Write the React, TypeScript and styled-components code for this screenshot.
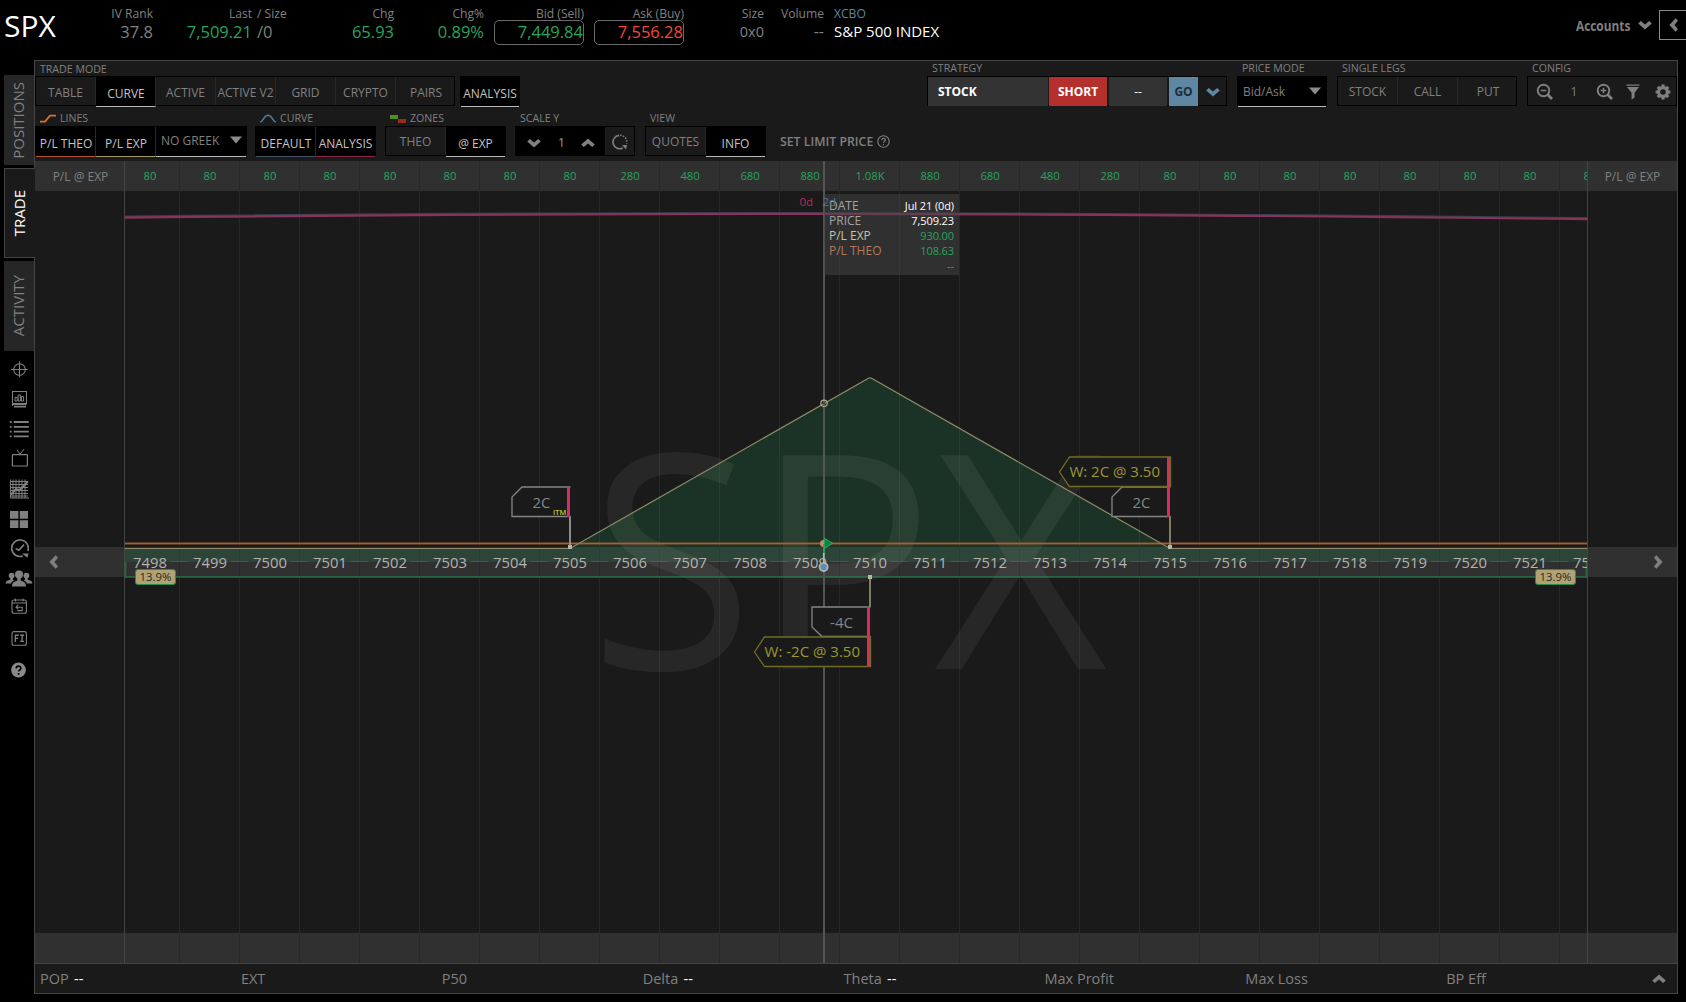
import React from "react";
import styled, { createGlobalStyle, css } from "styled-components";

const colors = {
  panel: "#1a1a1a",
  strip: "#303030",
  line: "#444444",
  text: "#808080",
  bright: "#c4c4c4",
  green: "#27a45d",
  red: "#f0473f",
  blue: "#5d87a3",
  pink: "#d62c62",
  tan: "#8d8b6b",
  olive: "#6f6d22",
};

const GlobalStyle = createGlobalStyle`
  *, *::before, *::after { box-sizing: border-box; }
  body {
    margin: 0;
    background: #000;
    overflow: hidden;
    color: ${colors.text};
    font-family: "Open Sans", "Noto Sans", sans-serif;
    font-size: 12px;
  }
  svg { display: block; flex: none; }
`;

const Page = styled.div`
  width: 1686px;
  height: 1002px;
  background: #000;
`;

/* ---------- quote header ---------- */

const Header = styled.header`
  display: flex;
  height: 60px;
  white-space: nowrap;
`;

const Ticker = styled.div`
  width: 93px;
  padding: 5px 0 0 4px;
  font-size: 30px;
  line-height: 42px;
  color: #fff;
`;

const Quote = styled.div<{ $width: number; $left?: boolean; $gap?: number }>`
  width: ${(p) => p.$width}px;
  margin-left: ${(p) => p.$gap || 0}px;
  padding-top: 5px;
  text-align: ${(p) => (p.$left ? "left" : "right")};
`;

const QuoteLabel = styled.div<{ $color?: string }>`
  font-size: 12.1px;
  line-height: 18px;
  height: 15px;
  color: ${(p) => p.$color || colors.text};
`;

const QuoteValue = styled.div<{ $color?: string; $boxed?: boolean; $size?: number; $line?: number }>`
  height: 25px;
  line-height: ${(p) => p.$line || 21}px;
  font-size: ${(p) => p.$size || 16.5}px;
  color: ${(p) => p.$color || colors.text};
  border: 1px solid ${(p) => (p.$boxed ? "#6a6a6a" : "transparent")};
  border-radius: 5px;
  padding-right: ${(p) => (p.$boxed ? 0 : 1)}px;
  margin-right: ${(p) => (p.$boxed ? 0 : -2)}px;
  margin-left: ${(p) => (p.$boxed ? 0 : -1)}px;
`;

const Accounts = styled.div`
  display: flex;
  align-items: center;
  height: 30px;
  width: 83px;
  margin: 10px 0 0 auto;
  font-size: 15px;
  font-weight: 700;

  span {
    width: 62px;
    transform: scaleX(0.79);
    transform-origin: 0 50%;
  }
`;

const CollapseButton = styled.div`
  display: flex;
  align-items: center;
  width: 27px;
  height: 30px;
  margin-top: 10px;
  padding-left: 7px;
  border: 1px solid #8a8a8a;
  border-right: 0;
`;

/* ---------- sidebar ---------- */

const Body = styled.div`
  display: flex;
  height: 934px;
`;

const Sidebar = styled.nav`
  display: flex;
  flex-direction: column;
  width: 34px;
  padding: 15px 0 0 4px;
`;

const SideTab = styled.div<{ $active?: boolean }>`
  display: flex;
  align-items: center;
  justify-content: center;
  height: 90px;
  margin-bottom: 3px;
  padding-right: 2px;
  background: #262626;
  font-size: 15px;
  z-index: 1;

  span {
    writing-mode: vertical-rl;
    transform: rotate(180deg);
    line-height: 20px;
  }

  ${(p) =>
    p.$active &&
    css`
      margin-right: -1px;
      background: ${colors.panel};
      color: #fff;
      border: 1px solid ${colors.line};
      border-right: 0;
    `}
`;

const SideIcons = styled.div`
  display: flex;
  flex-direction: column;
  align-items: center;
`;

const SideIcon = styled.div<{ $height: number }>`
  display: flex;
  align-items: center;
  justify-content: center;
  width: 30px;
  height: ${(p) => p.$height}px;
`;

/* ---------- toolbar ---------- */

const Panel = styled.main`
  width: 1644px;
  border: 1px solid ${colors.line};
  background: ${colors.panel};
`;

const Toolbar = styled.div`
  height: 100px;
`;

const ToolRow = styled.div<{ $height: number }>`
  display: flex;
  height: ${(p) => p.$height}px;
`;

const ToolGroup = styled.div<{ $gap?: number }>`
  margin-left: ${(p) => p.$gap || 0}px;
`;

const ToolLabel = styled.div<{ $height?: number; $drop?: number }>`
  display: flex;
  align-items: center;
  gap: 4px;
  height: ${(p) => p.$height || 15}px;
  padding: ${(p) => p.$drop || 0}px 0 0 5px;
  font-size: 10.6px;
  line-height: 15px;
  white-space: nowrap;
`;

const ButtonBar = styled.div<{ $width: number }>`
  display: flex;
  width: ${(p) => p.$width}px;
  height: 30px;
  border: 1px solid #000;
`;

const ToolButton = styled.div<{ $active?: boolean; $underline?: string; $drop?: number }>`
  display: flex;
  align-items: center;
  justify-content: center;
  width: 60px;
  height: 28px;
  padding-top: ${(p) => p.$drop || 0}px;
  border-right: 1px solid #282828;
  white-space: nowrap;

  &:last-child {
    width: auto;
    flex: 1;
    padding-left: ${(p) => (p.$active ? 0 : 2)}px;
    border-right: 0;
  }

  ${(p) =>
    p.$active &&
    css`
      height: 30px;
      padding-top: 3px;
      padding-left: 1px;
      background: #000;
      color: ${colors.bright};
      border-bottom: 1px solid ${p.$underline || "#b8b8b8"};
    `}
`;

const Select = styled.div<{ $width: number; $lift?: number }>`
  display: flex;
  align-items: center;
  justify-content: space-between;
  width: ${(p) => p.$width}px;
  height: 30px;
  padding: 0 ${(p) => (p.$lift ? 4 : 5)}px ${(p) => p.$lift || 1}px 5px;
  background: #000;
  border-bottom: 1px solid #b8b8b8;
  white-space: nowrap;
`;

const Cell = styled.div<{ $width: number; $bg?: string; $color?: string; $strong?: boolean; $left?: boolean; $drop?: number }>`
  display: flex;
  align-items: center;
  justify-content: ${(p) => (p.$left ? "flex-start" : "center")};
  flex: none;
  width: ${(p) => p.$width}px;
  height: ${(p) => (p.$bg ? 29 : 28)}px;
  padding-left: ${(p) => (p.$left ? 10 : 0)}px;
  padding-top: ${(p) => p.$drop || 0}px;
  background: ${(p) => p.$bg || "transparent"};
  color: ${(p) => p.$color || colors.text};
  font-weight: ${(p) => (p.$strong ? 700 : 400)};
`;

const Gap = styled.div<{ $width: number }>`
  flex: none;
  width: ${(p) => p.$width}px;
`;

const LimitPrice = styled.div`
  display: flex;
  align-items: center;
  gap: 4px;
  height: 30px;
  margin: 19px 0 0 14px;
  font-size: 12.3px;
  font-weight: 600;
  white-space: nowrap;
`;

/* ---------- chart ---------- */

const Chart = styled.section`
  position: relative;
  height: 802px;
`;

const Strip = styled.div`
  display: flex;
  height: 30px;
  background: ${colors.strip};
`;

const Gutter = styled.div<{ $justify?: string }>`
  display: flex;
  align-items: center;
  justify-content: ${(p) => p.$justify || "center"};
  width: 90px;
  flex: none;
  padding: 0 12px 0 ${(p) => (p.$justify ? 12 : 13)}px;
`;

const StripCells = styled.div<{ $size: number; $color: string; $line: number }>`
  position: relative;
  z-index: 2;
  display: flex;
  width: 1462px;
  overflow: hidden;
  color: ${(p) => p.$color};
  font-size: ${(p) => p.$size}px;

  span {
    flex: none;
    width: 60px;
    line-height: ${(p) => p.$line}px;
    text-align: center;
  }

  span:first-child {
    margin-left: -5px;
  }
`;

const Field = styled.div`
  height: 356px;
`;

const Layer = styled.svg<{ $z: number }>`
  position: absolute;
  top: 0;
  left: 89px;
  z-index: ${(p) => p.$z};
  font-family: "Open Sans", "Noto Sans", sans-serif;
`;

const InfoCard = styled.div`
  position: absolute;
  z-index: 2;
  left: 789px;
  top: 33px;
  width: 135px;
  height: 81px;
  padding: 4px 5px 0 5px;
  background: rgba(70, 70, 70, 0.5);
`;

const InfoRow = styled.div<{ $label?: string; $value?: string }>`
  display: flex;
  justify-content: space-between;
  height: 15px;
  line-height: 15px;
  color: ${(p) => p.$label || "#a3a3a3"};

  b {
    font-weight: 400;
    font-size: 11px;
    letter-spacing: -0.1px;
    color: ${(p) => p.$value || "#fff"};
  }
`;

const Badge = styled.div<{ $left: number }>`
  position: absolute;
  z-index: 3;
  top: 408px;
  left: ${(p) => p.$left}px;
  width: 41px;
  height: 16px;
  border: 1px solid #2b8a50;
  border-radius: 3px;
  background: #b0a272;
  color: #2a2a22;
  font-size: 11.4px;
  line-height: 14px;
  text-align: center;
`;

const Footer = styled.footer`
  display: flex;
  align-items: center;
  height: 30px;
  border-top: 1px solid ${colors.line};
  padding-left: 5px;
  font-size: 14.5px;
`;

const Stat = styled.div`
  width: 200.9px;

  b {
    margin-left: 1.5px;
    font-weight: 400;
    color: #fff;
  }

  &:last-of-type {
    width: 206px;
  }
`;

type ChevronProps = { dir: "up" | "down" | "left" | "right"; color?: string; size?: number };

const angles = { down: 0, left: 90, up: 180, right: 270 };

const Chevron = ({ dir, color = colors.text, size = 14 }: ChevronProps) => (
  <svg width={size} height={size} viewBox="0 0 14 14">
    <path
      d="M0.2 5.4 L2.8 3 L7 6.6 L11.2 3 L13.8 5.4 L7 11.6 Z"
      fill={color}
      transform={`rotate(${angles[dir]} 7 7)`}
    />
  </svg>
);

const Caret = () => (
  <svg width="12" height="8" viewBox="0 0 12 8">
    <path d="M0 0.5 H12 L6 7.5 Z" fill="#8c8c8c" />
  </svg>
);

const Magnifier = ({ plus }: { plus?: boolean }) => (
  <svg width="17" height="17" viewBox="0 0 17 17" fill="none" stroke={colors.text}>
    <circle cx="7.5" cy="7.5" r="5.8" strokeWidth="1.9" />
    <path d="M11.6 11.6 L16 16" strokeWidth="2.8" />
    <path d={plus ? "M4.7 7.5 H10.3 M7.5 4.7 V10.3" : "M4.7 7.5 H10.3"} strokeWidth="1.5" />
  </svg>
);

const Funnel = () => (
  <svg width="14" height="16" viewBox="0 0 14 16" fill={colors.text}>
    <path d="M0.5 0.5 H13.5 V1.7 H0.5 Z M1 3 H13 L8.6 8.8 V13.2 L5.6 15.8 V8.8 Z" />
  </svg>
);

const Gear = () => (
  <svg width="16" height="16" viewBox="0 0 16 16">
    <circle cx="8" cy="8" r="4.4" fill="none" stroke={colors.text} strokeWidth="3.2" />
    {[0, 45, 90, 135].map((angle) => (
      <path
        key={angle}
        d="M6.4 0.6 H9.6 V3 H6.4 Z M6.4 13 H9.6 V15.4 H6.4 Z"
        fill={colors.text}
        transform={`rotate(${angle} 8 8)`}
      />
    ))}
  </svg>
);

const Reset = () => (
  <svg width="16" height="16" viewBox="0 0 16 16" fill="none" stroke={colors.text}>
    <path d="M10.8 14 A6.7 6.7 0 1 1 7 1.4" strokeWidth="1.6" />
    <path d="M8 1.3 A6.7 6.7 0 0 1 14.6 9.6" strokeWidth="1.6" strokeDasharray="1.6 1.3" />
    <path d="M10 11 H15 L14 15.4 Z" fill={colors.text} stroke="none" />
  </svg>
);

const HelpOutline = () => (
  <svg width="13" height="13" viewBox="0 0 13 13" fill="none" stroke={colors.text}>
    <circle cx="6.5" cy="6.5" r="5.7" strokeWidth="1.1" />
    <path d="M4.7 5.2 C4.7 2.8 8.4 2.9 8.4 5.1 C8.4 6.4 6.5 6.4 6.5 8 M6.5 8.9 V10" strokeWidth="1.2" />
  </svg>
);

const sideIcons: { height: number; icon: React.ReactNode }[] = [
  {
    height: 30,
    icon: (
      <svg width="18" height="18" viewBox="0 0 18 18" fill="none" stroke={colors.text} strokeWidth="1.1">
        <circle cx="9.5" cy="9.5" r="5.8" />
        <path d="M9.5 1.2 V17.6 M1.2 9.5 H17.6" />
      </svg>
    ),
  },
  {
    height: 30,
    icon: (
      <svg width="16" height="18" viewBox="0 0 16 18" fill="none" stroke={colors.text}>
        <path d="M1.5 16 V1.5 H15.5 V13.5 H2.4" strokeWidth="1.1" />
        <path d="M4 11 V7.4 H6.2 V11 Z M7.2 11 V5 H9.4 V11 Z M10.4 11 V6.6 H12.6 V11 Z" />
        <path d="M1.4 14 H15.4 M3 16.6 H15" strokeWidth="1.8" />
      </svg>
    ),
  },
  {
    height: 30,
    icon: (
      <svg width="20" height="18" viewBox="0 0 20 18" stroke={colors.text} strokeWidth="1.8">
        <path d="M0.8 2 H2.6 M0.8 6.8 H2.6 M0.8 11.6 H2.6 M0.8 16.4 H2.6 M4.8 2 H19.8 M4.8 6.8 H19.8 M4.8 11.6 H19.8 M4.8 16.4 H19.8" />
      </svg>
    ),
  },
  {
    height: 28,
    icon: (
      <svg width="18" height="19" viewBox="0 0 18 19" fill="none" stroke={colors.text} strokeWidth="1.2">
        <rect x="2.4" y="5.6" width="15" height="11.4" rx="0.6" />
        <path d="M10 5.2 L7 0.8 M10 5.2 L14 0.2" strokeWidth="1" />
      </svg>
    ),
  },
  {
    height: 33,
    icon: (
      <svg width="20" height="20" viewBox="0 0 20 20" fill="none" stroke={colors.text}>
        <path d="M1.4 0.5 V19 H20 M4 0.5 V19 M7 0.5 V19 M10 0.5 V19 M13 0.5 V19 M16 0.5 V19 M1 2.5 H19 M1 5.5 H19 M1 8.5 H19 M1 11.5 H19 M1 14.5 H19 M1 17 H19" />
        <path d="M2 15.5 L7 10 L10.5 11.5 L19 2.4" strokeWidth="2" />
      </svg>
    ),
  },
  {
    height: 28,
    icon: (
      <svg width="18" height="17" viewBox="0 0 18 17" fill={colors.text}>
        <path d="M0 0 H8.4 V7.8 H0 Z M9.8 0 H18 V7.8 H9.8 Z M0 9.2 H8.4 V17 H0 Z M9.8 9.2 H18 V17 H9.8 Z" />
      </svg>
    ),
  },
  {
    height: 30,
    icon: (
      <svg width="19" height="19" viewBox="0 0 19 19" fill="none" stroke={colors.text} strokeWidth="1.6">
        <path d="M12.8 17 A8.3 8.3 0 1 1 17.8 12" />
        <path d="M5.6 9.6 L8.8 11.2 L14 5.6" />
        <path d="M12 14.4 H18.6 L17.4 18.8 Z" fill={colors.text} stroke="none" />
      </svg>
    ),
  },
  {
    height: 30,
    icon: (
      <svg width="28" height="17" viewBox="0 0 28 17" fill={colors.text}>
        <circle cx="14" cy="4.4" r="4" />
        <path d="M7 16.5 C7 12 9.5 11.6 12.3 10.4 V7 H15.7 V10.4 C18.5 11.6 21 12 21 16.5 Z" />
        <circle cx="6.6" cy="5.6" r="2.9" />
        <path d="M0.6 13.6 C0.8 10.6 3 10.8 5.4 9.6 V7.5 H8 V9.6 L9.2 10.3 C7.4 11.2 6.6 12 6.2 13.6 Z" />
        <circle cx="21.4" cy="5.6" r="2.9" />
        <path d="M27.4 13.6 C27.2 10.6 25 10.8 22.6 9.6 V7.5 H20 V9.6 L18.8 10.3 C20.6 11.2 21.4 12 21.8 13.6 Z" />
      </svg>
    ),
  },
  {
    height: 26,
    icon: (
      <svg width="16" height="16" viewBox="0 0 16 16" fill="none" stroke={colors.text} strokeWidth="1.1">
        <rect x="1" y="2" width="14.4" height="13.2" rx="2" />
        <path d="M1 5 H15 M4.4 0.4 V3.4 M12 0.4 V3.4" />
        <path d="M7.2 7 L5 9.2 L7.2 11.2 M5.2 9.2 H11.2 V12.6 H6.2" />
      </svg>
    ),
  },
  {
    height: 38,
    icon: (
      <svg width="16" height="16" viewBox="0 0 16 16" fill="none" stroke={colors.text} strokeWidth="1.1">
        <rect x="1" y="1.6" width="14.4" height="13.6" rx="2" />
        <path d="M4.4 11.9 V5.3 H7.8 M4.4 8.4 H7.2 M9.2 5.3 H13 M9.2 11.4 H13 M11.1 5.3 V11.4" strokeWidth="1.4" />
      </svg>
    ),
  },
  {
    height: 25,
    icon: (
      <svg width="16" height="16" viewBox="0 0 16 16">
        <circle cx="7.5" cy="8" r="7.4" fill="#8a8a8a" />
        <path d="M5.2 6.4 C5.2 3.2 9.9 3.4 9.9 6.2 C9.9 7.9 7.6 7.8 7.6 9.6 M7.6 10.9 V12.7" fill="none" stroke="#000" strokeWidth="1.7" />
      </svg>
    ),
  },
];

const profits = [
  80, 80, 80, 80, 80, 80, 80, 80, 280, 480, 680, 880, "1.08K",
  880, 680, 480, 280, 80, 80, 80, 80, 80, 80, 80, 80,
];
const strikes = profits.map((_, i) => 7498 + i);
const gridLines = profits.slice(1).map((_, i) => 179.5 + i * 60);

const stats: [string, string?][] = [
  ["POP", "--"],
  ["EXT"],
  ["P50"],
  ["Delta", "--"],
  ["Theta", "--"],
  ["Max Profit"],
  ["Max Loss"],
  ["BP Eff"],
];

const Leg = ({ x, y, label, flip, itm }: { x: number; y: number; label: string; flip?: boolean; itm?: boolean }) => (
  <g>
    <path
      d={
        flip
          ? `M${x} ${y} H${x - 58.5} V${y + 20} L${x - 48.5} ${y + 29.5} H${x}`
          : `M${x} ${y} H${x - 48.5} L${x - 58.5} ${y + 10} V${y + 29.5} H${x}`
      }
      fill={colors.panel}
      stroke="#858585"
      strokeWidth="1.3"
    />
    <text x={x - 29} y={y + 20.6} fontSize="15" textAnchor="middle" fill="#858585">
      {label}
    </text>
    {itm && (
      <text x={x - 17.5} y={y + 28} fontSize="7.4" fontWeight="600" fill="#c4c440">
        ITM
      </text>
    )}
  </g>
);

const Working = ({ x, y, width, label }: { x: number; y: number; width: number; label: string }) => (
  <g>
    <path
      d={`M${x} ${y} H${x - width + 10} L${x - width} ${y + 15} L${x - width + 10} ${y + 29.5} H${x} Z`}
      fill={colors.panel}
      stroke={colors.olive}
      strokeWidth="1.3"
    />
    <text x={x - 10.5} y={y + 20.4} fontSize="15" textAnchor="end" fill="#9a9830">
      {label}
    </text>
  </g>
);

const PayoffLayer = () => (
  <Layer $z={1} width="1464" height="802" viewBox="124 161 1464 802">
    {gridLines.map((x) => (
      <path key={x} d={`M${x} 161 V963`} stroke="rgba(40, 40, 40, 0.95)" />
    ))}
    <path d="M124.5 161 V963 M1587.5 161 V963" stroke={colors.line} />
    <path
      d="M125 562 V548.3 H570 L870 377.3 L1170 548.3 H1587 V562 Z"
      fill="rgba(38, 179, 102, 0.17)"
    />
    <text x="589" y="669.3" fontSize="300" letterSpacing="0.1" fill="rgba(255, 255, 255, 0.06)">
      SPX
    </text>
    {gridLines.map((x) => (
      <path key={x} d={`M${x - 9} 561.5 H${x + 9}`} stroke="rgba(140, 140, 140, 0.28)" />
    ))}
    <path d="M125.5 562 V577 H1586.5 V562" fill="none" stroke="rgba(39, 140, 86, 0.55)" strokeWidth="1.8" />
    <path d="M125 216.4 Q475 212.8 790 212.8 T1587 218" fill="none" stroke="#34404c" strokeWidth="1.8" />
    <path d="M125 217.6 Q475 214 790 213.8 T1587 219.2" fill="none" stroke="#8a3358" strokeWidth="2.2" />
    <path d="M125 543.5 H1587" stroke="rgba(181, 96, 44, 0.4)" strokeWidth="3" />
    <path d="M125 543.5 H1587" stroke="#b35c2a" />
    <path
      d="M125 548.5 H570 L868 378.5 Q870 377 872 378.5 L1170 548.5 H1587"
      fill="none"
      stroke={colors.tan}
      strokeWidth="1.2"
    />
    <text x="799.5" y="206" fontSize="11.5" fill="#b82c58">
      0d
    </text>
    <path d="M824 161 V963" stroke="#555" strokeWidth="2" />
  </Layer>
);

const MarkerLayer = () => (
  <Layer $z={3} width="1463" height="802" viewBox="124 161 1463 802">
    <text x="822.5" y="206" fontSize="11.5" fill="#5b7890">
      2d
    </text>
    <path d="M570 516 V547" stroke="#999" strokeWidth="1.8" />
    <path d="M1170 516 V547 M870 577 V607" stroke={colors.tan} strokeWidth="1.8" />
    <Leg x={570.5} y={487} label="2C" itm />
    <Leg x={1170.5} y={487} label="2C" />
    <Working x={1170.5} y={457} width={111} label="W: 2C @ 3.50" />
    <Leg x={870.5} y={607} label="-4C" flip />
    <Working x={870.5} y={637} width={116} label="W: -2C @ 3.50" />
    <path d="M567 487 H570 V517 H567 Z M1167 457 H1170 V517 H1167 Z M867 607 H870 V667 H867 Z" fill={colors.pink} />
    <path d="M568 545 H572 V549 H568 Z M1168 545 H1172 V549 H1168 Z M868 575 H872 V579 H868 Z" fill="#b5b5aa" />
    <circle cx="824" cy="403.3" r="3.2" fill="none" stroke="#b0ae8c" strokeWidth="1.2" />
    <circle cx="823.6" cy="543.5" r="3.6" fill="#c98a62" />
    <path d="M824.5 538.5 L832.5 543.2 L824.5 548.5 Z" fill="#187a48" stroke="#27a45d" strokeWidth="1.2" />
    <path d="M824 544 V554" stroke="#27a45d" strokeWidth="1.8" />
    <path d="M823.8 553 V564" stroke="#b5b5b5" strokeWidth="1.8" />
    <circle cx="823.6" cy="567.1" r="4.1" fill="#5d8fb3" stroke="#b5b5b5" strokeWidth="1.7" />
  </Layer>
);

const QuoteHeader = () => (
  <Header>
    <Ticker>SPX</Ticker>
    <Quote $width={60}>
      <QuoteLabel>IV Rank</QuoteLabel>
      <QuoteValue>37.8</QuoteValue>
    </Quote>
    <Quote $width={99}>
      <QuoteLabel>Last</QuoteLabel>
      <QuoteValue $color={colors.green}>7,509.21</QuoteValue>
    </Quote>
    <Quote $width={50} $left $gap={5}>
      <QuoteLabel>/ Size</QuoteLabel>
      <QuoteValue>/0</QuoteValue>
    </Quote>
    <Quote $width={87}>
      <QuoteLabel>Chg</QuoteLabel>
      <QuoteValue $color={colors.green}>65.93</QuoteValue>
    </Quote>
    <Quote $width={90}>
      <QuoteLabel>Chg%</QuoteLabel>
      <QuoteValue $color={colors.green}>0.89%</QuoteValue>
    </Quote>
    <Quote $width={90} $gap={10}>
      <QuoteLabel>Bid (Sell)</QuoteLabel>
      <QuoteValue $boxed $color={colors.green}>7,449.84</QuoteValue>
    </Quote>
    <Quote $width={90} $gap={10}>
      <QuoteLabel>Ask (Buy)</QuoteLabel>
      <QuoteValue $boxed $color={colors.red}>7,556.28</QuoteValue>
    </Quote>
    <Quote $width={80}>
      <QuoteLabel>Size</QuoteLabel>
      <QuoteValue $size={14.5}>0x0</QuoteValue>
    </Quote>
    <Quote $width={60}>
      <QuoteLabel>Volume</QuoteLabel>
      <QuoteValue $size={16}>--</QuoteValue>
    </Quote>
    <Quote $width={130} $gap={10} $left>
      <QuoteLabel $color={colors.blue}>XCBO</QuoteLabel>
      <QuoteValue $color="#fff" $size={15} $line={20}>S&amp;P 500 INDEX</QuoteValue>
    </Quote>
    <Accounts>
      <span>Accounts</span>
      <Chevron dir="down" />
    </Accounts>
    <CollapseButton>
      <Chevron dir="left" />
    </CollapseButton>
  </Header>
);

const TopTools = () => (
  <ToolRow $height={46}>
    <ToolGroup>
      <ToolLabel $drop={2}>TRADE MODE</ToolLabel>
      <ButtonBar $width={420}>
        {["TABLE", "CURVE", "ACTIVE", "ACTIVE V2", "GRID", "CRYPTO", "PAIRS"].map((name) => (
          <ToolButton key={name} $active={name === "CURVE"} $drop={2}>
            {name}
          </ToolButton>
        ))}
      </ButtonBar>
    </ToolGroup>
    <ToolGroup $gap={5}>
      <ToolLabel />
      <ButtonBar $width={60}>
        <ToolButton $active>ANALYSIS</ToolButton>
      </ButtonBar>
    </ToolGroup>
    <ToolGroup $gap={407}>
      <ToolLabel>STRATEGY</ToolLabel>
      <ButtonBar $width={300}>
        <Cell $width={120} $bg="#333" $color="#fff" $strong $left>STOCK</Cell>
        <Gap $width={1} />
        <Cell $width={58} $bg="#b5302c" $color="#fff" $strong>SHORT</Cell>
        <Gap $width={2} />
        <Cell $width={58} $bg="#333" $color="#fff">--</Cell>
        <Gap $width={2} />
        <Cell $width={29} $bg={colors.blue} $color="#1c2c38" $strong>GO</Cell>
        <Cell $width={29} $drop={1}>
          <Chevron dir="down" color={colors.blue} />
        </Cell>
      </ButtonBar>
    </ToolGroup>
    <ToolGroup $gap={10}>
      <ToolLabel>PRICE MODE</ToolLabel>
      <ButtonBar $width={90}>
        <Select $width={88}>Bid/Ask <Caret /></Select>
      </ButtonBar>
    </ToolGroup>
    <ToolGroup $gap={10}>
      <ToolLabel>SINGLE LEGS</ToolLabel>
      <ButtonBar $width={180}>
        <ToolButton $drop={1}>STOCK</ToolButton>
        <ToolButton $drop={1}>CALL</ToolButton>
        <ToolButton $drop={1}>PUT</ToolButton>
      </ButtonBar>
    </ToolGroup>
    <ToolGroup $gap={10}>
      <ToolLabel>CONFIG</ToolLabel>
      <ButtonBar $width={150}>
        <Gap $width={1} />
        <Cell $width={30} $drop={1}><Magnifier /></Cell>
        <Cell $width={30} $drop={1}>1</Cell>
        <Cell $width={30} $drop={1}><Magnifier plus /></Cell>
        <Cell $width={28} $drop={1}><Funnel /></Cell>
        <Cell $width={31} $drop={1}><Gear /></Cell>
      </ButtonBar>
    </ToolGroup>
  </ToolRow>
);

const CurveTools = () => (
  <ToolRow $height={54}>
    <ToolGroup>
      <ToolLabel $height={19} $drop={4}>
        <svg width="16" height="9" viewBox="0 0 16 9" fill="none" stroke="#d0752a" strokeWidth="1.8">
          <path d="M0 7.6 H5 L10 1.6 H16" />
        </svg>
        LINES
      </ToolLabel>
      <ButtonBar $width={212}>
        <ToolButton $active $underline="#b5532a">P/L THEO</ToolButton>
        <ToolButton $active $underline="#a8986a">P/L EXP</ToolButton>
        <Select $width={90} $lift={3}>NO GREEK <Caret /></Select>
      </ButtonBar>
    </ToolGroup>
    <ToolGroup $gap={8}>
      <ToolLabel $height={19} $drop={4}>
        <svg width="16" height="9" viewBox="0 0 16 9" fill="none" stroke="#51799a" strokeWidth="1.6">
          <path d="M0 8 C3.5 8 3.5 1.2 8 1.2 C12.5 1.2 12.5 8 16 8" />
        </svg>
        CURVE
      </ToolLabel>
      <ButtonBar $width={121}>
        <ToolButton $active $underline="#3f5566">DEFAULT</ToolButton>
        <ToolButton $active $underline="#8a2444">ANALYSIS</ToolButton>
      </ButtonBar>
    </ToolGroup>
    <ToolGroup $gap={9}>
      <ToolLabel $height={19} $drop={4}>
        <svg width="16" height="9" viewBox="0 0 16 9">
          <path d="M0 1 H8 V5 H0 Z" fill="#4f8f1c" />
          <path d="M8 5 H16 V9 H8 Z" fill="#9c2a1e" />
        </svg>
        ZONES
      </ToolLabel>
      <ButtonBar $width={121}>
        <ToolButton>THEO</ToolButton>
        <ToolButton $active>@ EXP</ToolButton>
      </ButtonBar>
    </ToolGroup>
    <ToolGroup $gap={9}>
      <ToolLabel $height={19} $drop={4}>SCALE Y</ToolLabel>
      <ButtonBar $width={120}>
        <Cell $width={36} $bg="#000" $drop={2}><Chevron dir="down" /></Cell>
        <Cell $width={19} $bg="#000" $color="#999" $drop={2}>1</Cell>
        <Cell $width={34} $bg="#000" $drop={2}><Chevron dir="up" /></Cell>
        <Cell $width={29} $drop={2}><Reset /></Cell>
      </ButtonBar>
    </ToolGroup>
    <ToolGroup $gap={10}>
      <ToolLabel $height={19} $drop={4}>VIEW</ToolLabel>
      <ButtonBar $width={121}>
        <ToolButton>QUOTES</ToolButton>
        <ToolButton $active>INFO</ToolButton>
      </ButtonBar>
    </ToolGroup>
    <LimitPrice>
      SET LIMIT PRICE <HelpOutline />
    </LimitPrice>
  </ToolRow>
);

const RiskChart = () => (
  <Chart>
    <Strip>
      <Gutter>P/L @ EXP</Gutter>
      <StripCells $size={11.2} $color={colors.green} $line={29}>
        {profits.map((value, i) => (
          <span key={i}>{value}</span>
        ))}
      </StripCells>
      <Gutter>P/L @ EXP</Gutter>
    </Strip>
    <Field />
    <Strip>
      <Gutter $justify="flex-start"><Chevron dir="left" /></Gutter>
      <StripCells $size={14.8} $color="#b4b4b0" $line={31}>
        {strikes.map((strike) => (
          <span key={strike}>{strike}</span>
        ))}
      </StripCells>
      <Gutter $justify="flex-end"><Chevron dir="right" /></Gutter>
    </Strip>
    <Field />
    <Strip />
    <PayoffLayer />
    <MarkerLayer />
    <Badge $left={100}>13.9%</Badge>
    <Badge $left={1500}>13.9%</Badge>
    <InfoCard>
      <InfoRow>DATE <b>Jul 21 (0d)</b></InfoRow>
      <InfoRow>PRICE <b>7,509.23</b></InfoRow>
      <InfoRow $label="#c9c3a0" $value={colors.green}>P/L EXP <b>930.00</b></InfoRow>
      <InfoRow $label="#b07a5c" $value={colors.green}>P/L THEO <b>108.63</b></InfoRow>
      <InfoRow $value={colors.text}><span /> <b>--</b></InfoRow>
    </InfoCard>
  </Chart>
);

const App = () => (
  <Page>
    <GlobalStyle />
    <QuoteHeader />
    <Body>
      <Sidebar>
        <SideTab><span>POSITIONS</span></SideTab>
        <SideTab $active><span>TRADE</span></SideTab>
        <SideTab><span>ACTIVITY</span></SideTab>
        <SideIcons>
          {sideIcons.map(({ height, icon }, i) => (
            <SideIcon key={i} $height={height}>{icon}</SideIcon>
          ))}
        </SideIcons>
      </Sidebar>
      <Panel>
        <Toolbar>
          <TopTools />
          <CurveTools />
        </Toolbar>
        <RiskChart />
        <Footer>
          {stats.map(([label, value]) => (
            <Stat key={label}>
              {label} {value && <b>{value}</b>}
            </Stat>
          ))}
          <Chevron dir="up" />
        </Footer>
      </Panel>
    </Body>
  </Page>
);

export default App;
